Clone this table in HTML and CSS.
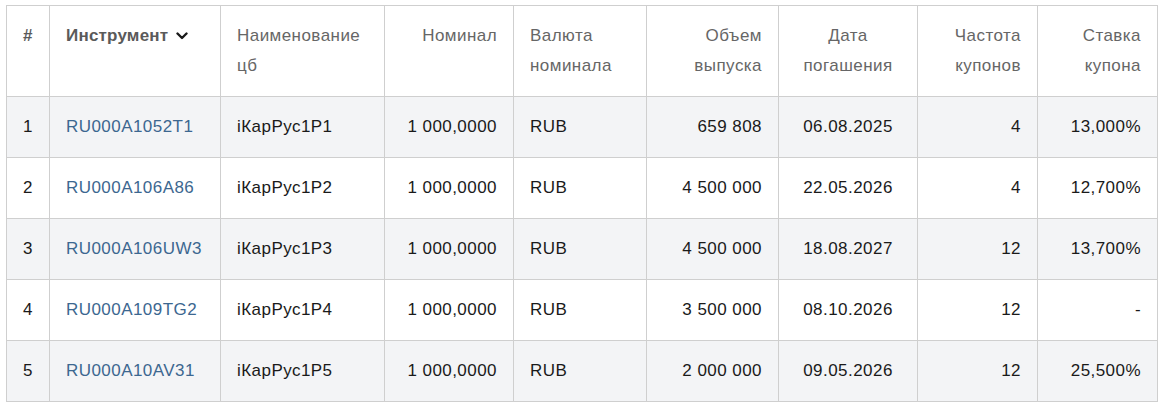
FILE: index.html
```html
<!DOCTYPE html>
<html lang="ru">
<head>
<meta charset="utf-8">
<link rel="stylesheet" href="styles.css">
</head>
<body>
<div class="wrap">
<table class="bonds">
  <colgroup>
    <col class="c1"><col class="c2"><col class="c3"><col class="c4"><col class="c5"><col class="c6"><col class="c7"><col class="c8"><col class="c9">
  </colgroup>
  <thead>
    <tr>
      <th class="l hash">#</th>
      <th class="l sort">Инструмент <svg class="chev" width="12" height="8" viewBox="0 0 12 8"><path d="M1.5 1.5 L6 6 L10.5 1.5" fill="none" stroke="#1a1a1a" stroke-width="2.4" stroke-linecap="round" stroke-linejoin="round"/></svg></th>
      <th class="l">Наименование<br>цб</th>
      <th class="r">Номинал</th>
      <th class="l">Валюта<br>номинала</th>
      <th class="r">Объем<br>выпуска</th>
      <th class="c">Дата<br>погашения</th>
      <th class="r">Частота<br>купонов</th>
      <th class="r">Ставка<br>купона</th>
    </tr>
  </thead>
  <tbody>
    <tr class="odd"><td>1</td><td><a href="#">RU000A1052T1</a></td><td>iКарРус1Р1</td><td class="r">1 000,0000</td><td>RUB</td><td class="r">659 808</td><td class="c">06.08.2025</td><td class="r">4</td><td class="r">13,000%</td></tr>
    <tr><td>2</td><td><a href="#">RU000A106A86</a></td><td>iКарРус1Р2</td><td class="r">1 000,0000</td><td>RUB</td><td class="r">4 500 000</td><td class="c">22.05.2026</td><td class="r">4</td><td class="r">12,700%</td></tr>
    <tr class="odd"><td>3</td><td><a href="#">RU000A106UW3</a></td><td>iКарРус1Р3</td><td class="r">1 000,0000</td><td>RUB</td><td class="r">4 500 000</td><td class="c">18.08.2027</td><td class="r">12</td><td class="r">13,700%</td></tr>
    <tr><td>4</td><td><a href="#">RU000A109TG2</a></td><td>iКарРус1Р4</td><td class="r">1 000,0000</td><td>RUB</td><td class="r">3 500 000</td><td class="c">08.10.2026</td><td class="r">12</td><td class="r">-</td></tr>
    <tr class="odd"><td>5</td><td><a href="#">RU000A10AV31</a></td><td>iКарРус1Р5</td><td class="r">1 000,0000</td><td>RUB</td><td class="r">2 000 000</td><td class="c">09.05.2026</td><td class="r">12</td><td class="r">25,500%</td></tr>
  </tbody>
</table>
</div>
</body>
</html>
```
FILE: styles.css
```css
html, body {
  margin: 0;
  padding: 0;
  background: #ffffff;
}
.wrap {
  padding: 5px 5px 0 6px;
}
.bonds {
  border-collapse: collapse;
  table-layout: fixed;
  width: 1152px;
  font-family: "Liberation Sans", Arial, sans-serif;
  font-size: 17px;
  letter-spacing: 0.45px;
  color: #1a1a1a;
}
.c1 { width: 43px; }
.c2 { width: 171px; }
.c3 { width: 164px; }
.c4 { width: 129px; }
.c5 { width: 133px; }
.c6 { width: 132px; }
.c7 { width: 139px; }
.c8 { width: 120px; }
.c9 { width: 120px; }
.bonds th, .bonds td {
  border: 1px solid #cfcfcf;
  padding: 15px 16px;
  line-height: 30px;
  vertical-align: top;
  white-space: nowrap;
}
.bonds th {
  font-weight: normal;
  color: #666666;
  text-align: left;
}
.bonds th.sort, .bonds th.hash {
  font-weight: bold;
  color: #5a5a5a;
}
.bonds th.sort {
  letter-spacing: 0.2px;
}
.chev {
  margin-left: 3px;
  vertical-align: 1px;
}
.bonds .l { text-align: left; }
.bonds .r { text-align: right; }
.bonds .c { text-align: center; }
.bonds tr.odd td {
  background: #f3f4f6;
}
.bonds a {
  color: #3c6790;
  text-decoration: none;
}
```
